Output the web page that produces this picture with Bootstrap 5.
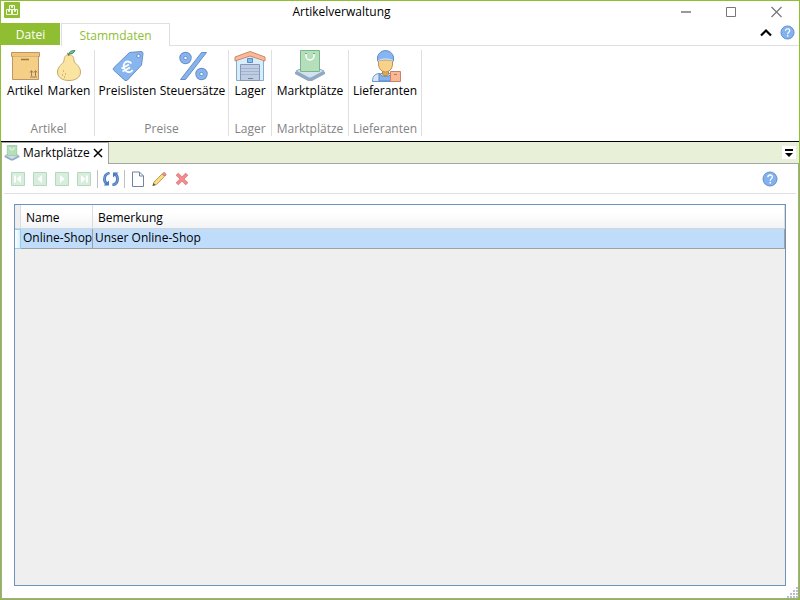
<!DOCTYPE html>
<html lang="de">
<head>
<meta charset="utf-8">
<meta name="viewport" content="width=device-width, initial-scale=1">
<title>Artikelverwaltung</title>
<link rel="stylesheet" href="https://cdn.jsdelivr.net/npm/bootstrap@5.3.0/dist/css/bootstrap.min.css">
<style>
:root{--green:#8fbe32;--line:#dfdfdf;--edge:#a5a5a5}
body{font:12px/16px "Open Sans","Noto Sans",sans-serif;color:#000;background:#fff}
button{font:inherit;color:inherit;background:none;border:0;padding:0;white-space:nowrap}
svg{display:block;flex:none}
.window{border:1px solid var(--green)}
.titlebar{height:22px;display:grid;grid-template-columns:auto 1fr auto}
.app-logo{margin:1px 0 0 3px}
.app-title{padding:3px 18px 0 0;text-align:center}
.win-buttons{gap:35px;padding-right:17px}
.tabs-row{height:23px}
.tab-spacer{border-bottom:1px solid var(--line)}
.tab-file{width:59px;background:var(--green);color:#fff;margin-bottom:1px}
.tab-main{width:109px;color:var(--green);border:1px solid var(--line);border-bottom:0;margin-left:1px}
.tab-file,.tab-main{padding-top:2px}
.ribbon{height:95px;padding-top:4px}
.ribbon-group{height:86px;border-right:1px solid var(--line);text-align:center}
.ribbon-group .caption{color:#838383;line-height:14px}
.cmd{display:flex;flex-direction:column;align-items:center}
.cmd span{margin-top:1px}
.g1{width:94px;padding-left:2px}.g2{width:134px}.g3{width:43px}.g4{width:77px}.g5{width:73px}
.w1{width:44px}.w2{width:65px}
.docs{height:23px;background:#e8f1d8;border-top:1px solid #000}
.doc-spacer{border-bottom:1px solid var(--edge)}
.doc-tab{width:108px;background:#fff;border:1px solid var(--edge);border-bottom:0;padding:0 0 2px 2px;gap:3px}
.drop{width:14px;height:13px;background:#fff;margin:4px 3px 0 0}
.page{border:1px solid var(--edge);border-top:0}
.tools{height:30px;border-bottom:1px solid var(--line);margin:0 2px;padding:0 18px 0 7px}
.nav-set{gap:8px}
.rule{width:1px;height:18px;background:#bdc1c7}
.rule-first{margin:0 4px 0 6px}
.rule-next{margin:0 7px 0 4px}
.grid-box{margin:10px 12px 12px;border:1px solid #6e93b8;background:#efefef}
.records{width:100%;border-collapse:separate;border-spacing:0;table-layout:fixed}
.records th{height:24px;font-weight:400;padding:2px 0 0 5px;background:linear-gradient(#fff 0 35%,#f2f3f5);border-right:1px solid #dcdcdc;border-bottom:1px solid #d5d5d5}
.records td{height:20px;padding:0 0 1px 2px;background:#bfddfb;border-right:1px solid #a0a0a0;border-bottom:1px solid #a0a0a0;white-space:nowrap}
.records th:first-child{background:#efefef;padding:0}
.records td:first-child{background:linear-gradient(90deg,#fff,#d9f0fb);border:1px solid #8fd3f2;border-left:0;padding:0}
.c0{width:6px}.c1{width:72px}
.grip{position:absolute;right:1px;bottom:1px}
</style>
</head>
<body>
<svg width="0" height="0" class="position-absolute" aria-hidden="true">
<defs>
<symbol id="shop" viewBox="0 0 32 32"><path d="M1 22 10 18H22L31 22V24L18 31H14L1 24Z" fill="#91aac3"/><path d="M2 21 11 17H21L30 21 17 28H15Z" fill="#d4e1ef" stroke="#91aac3"/><path d="M6.500 .5H25.500V21.500H6.500Z" fill="#b4dfba" stroke="#78b68b"/><path d="M12 4V6A4 4 0 0 0 20 6V4" fill="none" stroke="#fff" stroke-width="1.500"/><path d="M12 3V4M20 3V4" stroke="#70a981" stroke-width="2"/></symbol>
<symbol id="help" viewBox="0 0 16 16"><circle cx="8" cy="8" r="7" fill="#83b2ee" stroke="#658fc8"/><path d="M5.800 6.200Q6 4 8.200 4T10.300 6C10.300 7.800 8.200 7.700 8.200 9.800" fill="none" stroke="#fff" stroke-width="1.300"/><path d="M7.500 11H9V12.500H7.500Z" fill="#fff"/></symbol>
</defs></svg>
<div class="window min-vh-100 d-flex flex-column position-relative">
<header class="titlebar">
  <svg class="app-logo" width="16" height="16" viewBox="0 0 16 16"><rect width="16" height="16" rx="1" fill="#8fbe32"/><path d="M5.500 3.500H10.500V7.500H5.500ZM2.500 7.500H7.500V12.500H2.500ZM8.500 7.500H13.500V12.500H8.500ZM7.500 3V5.500H8.500V3M4.500 8V9.500H5.500V8M10.500 8V9.500H11.500V8" fill="none" stroke="#f3f8e8"/></svg>
  <div class="app-title">Artikelverwaltung</div>
  <div class="win-buttons d-flex justify-content-end">
    <button type="button" aria-label="Minimieren"><svg width="10" height="20"><path d="M0 10H10" stroke="#999" stroke-width="2"/></svg></button>
    <button type="button" aria-label="Maximieren"><svg width="10" height="20"><path d="M.5 5.500H9.500V14.500H.5Z" fill="none" stroke="#777"/></svg></button>
    <button type="button" aria-label="Schließen"><svg width="11" height="20"><path d="M.5 5 10.500 15M10.500 5 .5 15" stroke="#777" stroke-width="1.200"/></svg></button>
  </div>
</header>
<div class="tabs-row d-flex">
  <button type="button" class="tab-file">Datei</button>
  <button type="button" class="tab-main">Stammdaten</button>
  <div class="tab-spacer flex-grow-1 d-flex justify-content-end align-items-center pe-1 pb-1">
    <button type="button" class="me-2" aria-label="Menüband einklappen"><svg width="12" height="14"><path d="M1 10.500 6 5.500 11 10.500" fill="none" stroke="#000" stroke-width="2.200"/></svg></button>
    <button type="button" aria-label="Hilfe"><svg width="15" height="15"><use href="#help"/></svg></button>
  </div>
</div>
<section class="ribbon d-flex">
  <div class="ribbon-group g1 d-flex flex-column justify-content-between">
    <div class="d-flex">
      <button type="button" class="cmd w1"><svg width="32" height="32" viewBox="0 0 32 32"><path d="M3.500 8.500H29.500V29.500H3.500Z" fill="#f4cf85" stroke="#bd9668"/><path d="M2.500 2.500H30.500V6.500H2.500Z" fill="#f0c578" stroke="#bd9668"/><path d="M3.500 6.500H29.500V10H3.500Z" fill="#f4cf85"/><path d="M3.500 6V10M29.500 6V10" stroke="#bd9668"/><path d="M12 9.500H20" stroke="#9b7648" stroke-width="1.500"/><path d="M22.500 21V26M26.500 21V26M21 22.500 22.500 20.500 24 22.500M25 22.500 26.500 20.500 28 22.500M21 27H28" stroke="#9b7e62" fill="none"/></svg><span>Artikel</span></button>
      <button type="button" class="cmd w1"><svg width="32" height="32" viewBox="0 0 32 32"><path d="M16 4.500C20 4.500 21 8 21 11 22 14 27.500 16 27.500 22 27.500 28 22 30.500 16 30.500S4.500 28 4.500 22C4.500 16 10 14 11 11 11 8 12 4.500 16 4.500Z" fill="#fae4a2" stroke="#c7ab68"/><path d="M16 6Q15.500 4 14.500 3" fill="none" stroke="#7b7651" stroke-width="1.300"/><path d="M16 4Q16 .5 22 .5 21 4 16 4Z" fill="#7cc19d" stroke="#3f8e6d"/><path d="M10 21H11M12 24H13M9 25H10M11 27H12" stroke="#c8aa67" stroke-width="1.500"/></svg><span>Marken</span></button>
    </div><div class="caption">Artikel</div>
  </div>
  <div class="ribbon-group g2 d-flex flex-column justify-content-between">
    <div class="d-flex">
      <button type="button" class="cmd w2"><svg width="32" height="32" viewBox="0 0 32 32"><path d="M17.500 2.500 29 1.500Q31 1.500 31 3.500L29.500 15 15.500 30Q14 31.500 12.500 30L1.500 20Q.5 19 2 17.500Z" fill="#86b5ef" stroke="#6690c6"/><circle cx="26.500" cy="6" r="1.700" fill="#fff" stroke="#5f89bd"/><path d="M19.500 13.500A4.500 5.500 -25 1 0 20.500 20M9.500 18.500 17 14.500M10.500 21.500 18 17.500" stroke="#fff" stroke-width="1.800" fill="none"/></svg><span>Preislisten</span></button>
      <button type="button" class="cmd w2"><svg width="32" height="32" viewBox="0 0 32 32"><path d="M24.500 2.500H29.500L8.500 29.500H3.500Z" fill="#87b4ee" stroke="#648fc7"/><g fill="none" stroke="#648fc7" stroke-width="5"><circle cx="8.500" cy="8" r="3.700"/><circle cx="24.500" cy="24" r="3.700"/></g><g fill="none" stroke="#87b4ee" stroke-width="3.200"><circle cx="8.500" cy="8" r="3.700"/><circle cx="24.500" cy="24" r="3.700"/></g></svg><span>Steuersätze</span></button>
    </div><div class="caption">Preise</div>
  </div>
  <div class="ribbon-group g3 d-flex flex-column justify-content-between">
    <button type="button" class="cmd"><svg width="32" height="32" viewBox="0 0 32 32"><path d="M2.500 8 16 3 29.500 8V30.500H2.500Z" fill="#d5edfc" stroke="#8aabc7"/><path d="M16 1.500 31 7V11L16 6 1 11V7Z" fill="#fcb996" stroke="#c8896d"/><path d="M13.500 8.500H18.500V12.500H13.500Z" fill="#8dbae9" stroke="#6089bc"/><path d="M6.500 14.500H25.500V30.500H6.500Z" fill="#bfcce2" stroke="#8799b9"/><path d="M7 18.500H25M7 21.500H25M7 24.500H25" stroke="#a3b2cd"/><path d="M14 28.500H19" stroke="#71819e"/></svg><span>Lager</span></button><div class="caption">Lager</div>
  </div>
  <div class="ribbon-group g4 d-flex flex-column justify-content-between">
    <button type="button" class="cmd"><svg width="32" height="32"><use href="#shop"/></svg><span>Marktplätze</span></button><div class="caption">Marktplätze</div>
  </div>
  <div class="ribbon-group g5 d-flex flex-column justify-content-between">
    <button type="button" class="cmd"><svg width="32" height="32" viewBox="0 0 32 32"><path d="M3.500 31.500C3.500 25 7 23.500 11.500 23.500H21C26 23.500 28.500 26 28.500 31.500Z" fill="#d7e7f8" stroke="#7098c7"/><path d="M10 23V31H23V23L20 26H13Z" fill="#83b2ec" stroke="#618bc1"/><path d="M13.500 19H19.500V24Q16.500 28 13.500 24Z" fill="#dfa952" stroke="#b3823d"/><path d="M9.500 10H23.500V15Q22.500 21.500 16.500 22 10.500 21.500 9.500 15Z" fill="#f8d28a" stroke="#bd9355"/><path d="M8.500 11V7Q10 1 16.500 .5 23 1 24.500 7V11Q16.500 7.500 8.500 11Z" fill="#86b5ef" stroke="#618bc1"/><path d="M9 10.500Q16.500 7.500 24 10.500" fill="none" stroke="#c8dff8" stroke-width="1.300"/><path d="M21.500 21.500H31.500V31.500H21.500Z" fill="#fbb894" stroke="#c8806b"/><path d="M25 24.500H28" stroke="#b27666"/></svg><span>Lieferanten</span></button><div class="caption">Lieferanten</div>
  </div>
</section>
<div class="docs d-flex">
  <div class="doc-tab d-flex align-items-center">
    <svg width="16" height="16"><use href="#shop"/></svg><span>Marktplätze</span>
    <button type="button" aria-label="Tab schließen"><svg width="10" height="10"><path d="M1 1 9 9M9 1 1 9" stroke="#000" stroke-width="1.500"/></svg></button>
  </div>
  <div class="doc-spacer flex-grow-1 d-flex justify-content-end"><button type="button" class="drop" aria-label="Fensterliste"><svg width="14" height="13"><path d="M3 3H11V5H3ZM3 7H11L7 11Z"/></svg></button></div>
</div>
<main class="page flex-grow-1 d-flex flex-column">
  <div class="tools d-flex align-items-center">
    <div class="nav-set d-flex">
      <button type="button" disabled aria-label="Erster"><svg width="14" height="14"><path d="M.5.5H13.500V13.500H.5Z" fill="#d9eddc" stroke="#b5d8c0"/><path d="M3 3.500H5V10.500H3ZM10 3V11L5.500 7Z" fill="#fff"/></svg></button>
      <button type="button" disabled aria-label="Zurück"><svg width="14" height="14"><path d="M.5.5H13.500V13.500H.5Z" fill="#d9eddc" stroke="#b5d8c0"/><path d="M9 3V11L4.500 7Z" fill="#fff"/></svg></button>
      <button type="button" disabled aria-label="Weiter"><svg width="14" height="14"><path d="M.5.5H13.500V13.500H.5Z" fill="#d9eddc" stroke="#b5d8c0"/><path d="M5 3V11L9.500 7Z" fill="#fff"/></svg></button>
      <button type="button" disabled aria-label="Letzter"><svg width="14" height="14"><path d="M.5.5H13.500V13.500H.5Z" fill="#d9eddc" stroke="#b5d8c0"/><path d="M9 3.500H11V10.500H9ZM4 3V11L8.500 7Z" fill="#fff"/></svg></button>
    </div>
    <div class="rule rule-first"></div>
    <button type="button" aria-label="Aktualisieren"><svg width="18" height="16" viewBox="0 0 18 16"><path d="M7.500 2Q2.500 3 2.500 8 2.500 11.500 5 13M10.500 14Q15.500 13 15.500 8 15.500 4.500 13 3" fill="none" stroke="#4272b5" stroke-width="2.800"/><path d="M7.500 2Q2.500 3 2.500 8 2.500 11.500 5 13M10.500 14Q15.500 13 15.500 8 15.500 4.500 13 3" fill="none" stroke="#6c9ddc" stroke-width="1.200"/><path d="M1.500 14.500H7V9.500ZM16.500 1.500H11V6.500Z" fill="#4b7dc2"/></svg></button>
    <div class="rule rule-next"></div>
    <button type="button" class="me-2" aria-label="Neu"><svg width="12" height="16"><path d="M.5 1H7.500L11.500 5V15.500H.5ZM7.500 1V5H11.500" fill="#fff" stroke="#71859f"/></svg></button>
    <button type="button" class="me-2" aria-label="Bearbeiten"><svg width="15" height="16"><path d="M1 14.500 2 11 10 3 12.500 5.500 4.500 13.500Z" fill="#fbdc83" stroke="#bea05e"/><path d="M10.500 2.500 11.500 1.500Q14 1.500 14 4L13 5Z" fill="#f29a9a" stroke="#cf8585"/><path d="M.5 15 1.500 12 3.500 14Z" fill="#555"/></svg></button>
    <button type="button" aria-label="Löschen"><svg width="14" height="14"><path d="M2 2 12 12M12 2 2 12" stroke="#e07c7c" stroke-width="3.600"/><path d="M2.500 2.500 11.500 11.500M11.500 2.500 2.500 11.500" stroke="#f38d8d" stroke-width="2.200"/></svg></button>
    <button type="button" class="ms-auto" aria-label="Hilfe"><svg width="16" height="16"><use href="#help"/></svg></button>
  </div>
  <div class="grid-box flex-grow-1">
    <table class="records">
      <colgroup><col class="c0"><col class="c1"><col></colgroup>
      <thead><tr><th></th><th scope="col">Name</th><th scope="col">Bemerkung</th></tr></thead>
      <tbody><tr><td></td><td>Online-Shop</td><td>Unser Online-Shop</td></tr></tbody>
    </table>
  </div>
</main>
<svg class="grip" width="11" height="11"><path d="M9 0H11V2H9ZM6 3H8V5H6ZM9 3H11V5H9ZM3 6H5V8H3ZM6 6H8V8H6ZM9 6H11V8H9ZM0 9H2V11H0ZM3 9H5V11H3ZM6 9H8V11H6ZM9 9H11V11H9Z" fill="#b9c0cb"/></svg>
</div>
<script src="https://cdn.jsdelivr.net/npm/bootstrap@5.3.0/dist/js/bootstrap.bundle.min.js"></script>
</body>
</html>
